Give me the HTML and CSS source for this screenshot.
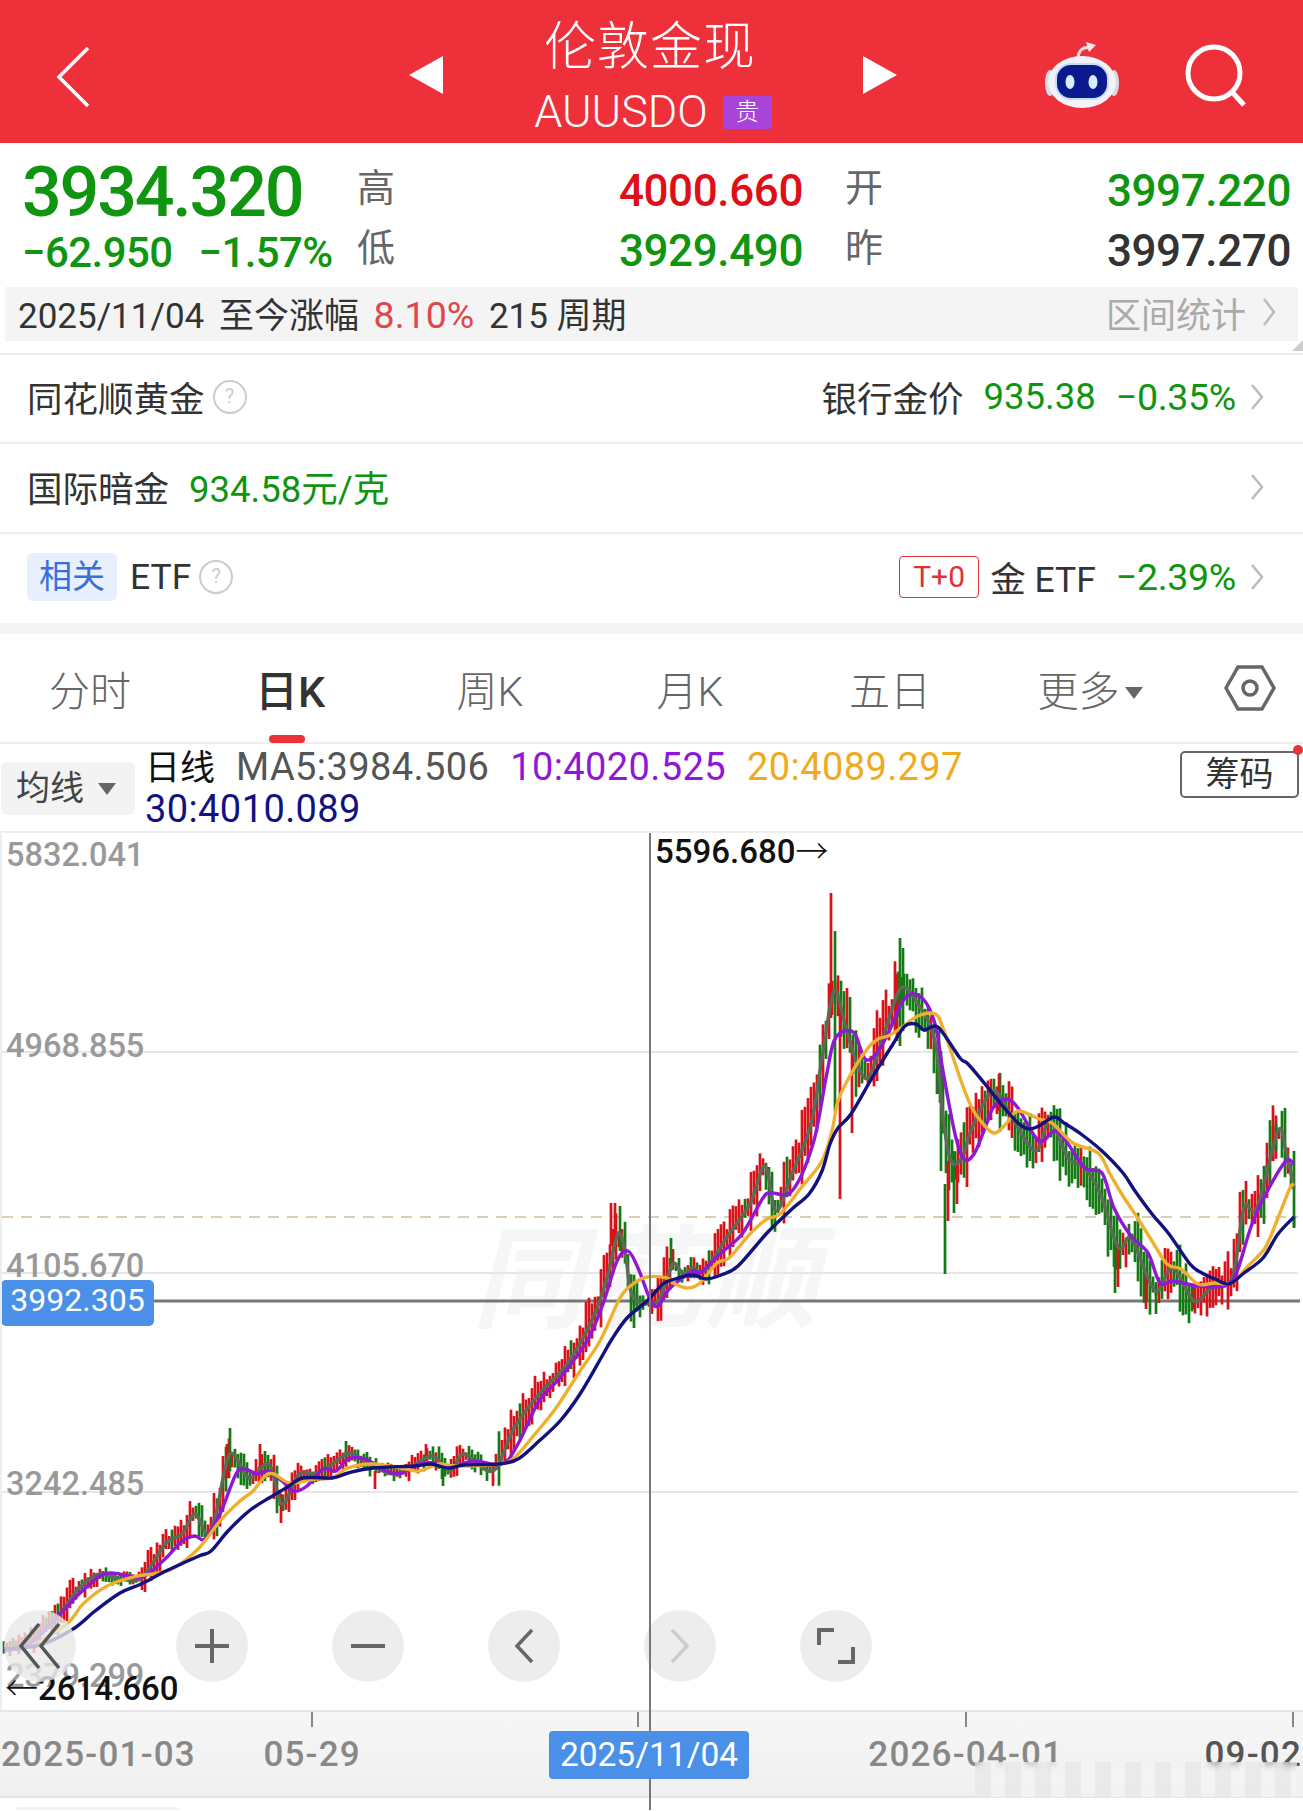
FILE: index.html
```html
<!DOCTYPE html>
<html lang="zh-CN">
<head>
  <meta charset="UTF-8">
  <title>伦敦金现 AUUSDO</title>
  <link rel="stylesheet" href="styles.css">
</head>
<body>
  <header class="topbar">
    <svg class="back" width="36" height="62" viewBox="0 0 36 62"><path d="M33 2 L4 31 L33 60" fill="none" stroke="#fff" stroke-width="3.5"/></svg>
    <svg class="tri" width="34" height="38" viewBox="0 0 34 38"><path d="M34 0V38L0 19Z" fill="#fff"/></svg>
    <div class="title">
      <div class="title-name">伦敦金现</div>
      <div class="title-code">AUUSDO <span class="tag-gold">贵</span></div>
    </div>
    <svg class="tri" width="34" height="38" viewBox="0 0 34 38"><path d="M0 0V38L34 19Z" fill="#fff"/></svg>
    <svg class="robot" width="76" height="68" viewBox="0 0 76 68">
      <path d="M34 19 C34 10 40 6 46 8" fill="none" stroke="#f4dfe0" stroke-width="3"/>
      <path d="M42 2 L52 5 L45 12Z" fill="#f7e6e6"/>
      <ellipse cx="6" cy="43" rx="5" ry="13" fill="#d5dbe6"/>
      <ellipse cx="70" cy="43" rx="5" ry="13" fill="#d5dbe6"/>
      <ellipse cx="38" cy="42" rx="34" ry="26" fill="#f1f3f8"/>
      <rect x="12" y="24" width="52" height="35" rx="15" fill="#0a1a8e" stroke="#c5dcfa" stroke-width="2"/>
      <ellipse cx="26" cy="42" rx="4.5" ry="7" fill="#d6eeff"/>
      <ellipse cx="49" cy="42" rx="4.5" ry="7" fill="#d6eeff"/>
    </svg>
    <svg class="search" width="62" height="66" viewBox="0 0 62 66"><circle cx="29" cy="30" r="26" fill="none" stroke="#fff" stroke-width="5"/><path d="M48 50 L59 62" stroke="#fff" stroke-width="5"/></svg>
  </header>

  <section class="quote">
    <div class="quote-main">
      <div class="price">3934.320</div>
      <div class="change"><span>−62.950</span><span>−1.57%</span></div>
    </div>
    <div class="quote-grid">
      <span class="q-label">高</span><span class="q-val up">4000.660</span>
      <span class="q-label q-label-r">开</span><span class="q-val down">3997.220</span>
      <span class="q-label">低</span><span class="q-val down">3929.490</span>
      <span class="q-label q-label-r">昨</span><span class="q-val flat">3997.270</span>
    </div>
  </section>

  <div class="range">
    <div>2025/11/04 至今涨幅 <span class="range-pct">8.10%</span> <span class="range-count">215 周期</span></div>
    <div class="range-link">区间统计<svg width="14" height="30" viewBox="0 0 14 30"><path d="M2 2 L12 15 L2 28" fill="none" stroke="#bbb" stroke-width="2.5"/></svg></div>
    <i class="range-corner"></i>
  </div>

  <div class="row row-first">
    <div class="row-left">同花顺黄金<span class="help">?</span></div>
    <div class="row-right">银行金价<b class="green gap">935.38</b><b class="green gap pct">−0.35%</b><svg class="more" width="14" height="28" viewBox="0 0 14 28"><path d="M2 2 L12 14 L2 26" fill="none" stroke="#bbb" stroke-width="2.5"/></svg></div>
  </div>
  <div class="row">
    <div class="row-left">国际暗金<b class="green gap">934.58元/克</b></div>
    <div class="row-right"><svg class="more" width="14" height="28" viewBox="0 0 14 28"><path d="M2 2 L12 14 L2 26" fill="none" stroke="#bbb" stroke-width="2.5"/></svg></div>
  </div>
  <div class="row row-last">
    <div class="row-left"><span class="tag-rel">相关</span>ETF<span class="help">?</span></div>
    <div class="row-right"><span class="tag-t0">T+0</span><span class="gold-etf">金 ETF</span><b class="green gap pct">−2.39%</b><svg class="more" width="14" height="28" viewBox="0 0 14 28"><path d="M2 2 L12 14 L2 26" fill="none" stroke="#bbb" stroke-width="2.5"/></svg></div>
  </div>

  <nav class="tabs">
    <span>分时</span>
    <span class="tab-on">日K</span>
    <span>周K</span>
    <span>月K</span>
    <span>五日</span>
    <span>更多<i class="caret"></i></span>
    <svg class="hex" width="52" height="48" viewBox="0 0 52 48"><path d="M14 3H38L50 24L38 45H14L2 24Z" fill="none" stroke="#666" stroke-width="3.5"/><circle cx="26" cy="24" r="7" fill="none" stroke="#666" stroke-width="3.5"/></svg>
  </nav>

  <div class="ma-bar">
    <div class="ma-select">均线<i class="caret caret-sm"></i></div>
    <div class="ma-text">
      <span class="ma-day">日线</span><span class="ma5">MA5:3984.506</span><span class="ma10">10:4020.525</span><span class="ma20">20:4089.297</span><br>
      <span class="ma30">30:4010.089</span>
    </div>
    <div class="chip-btn">筹码<i class="chip-dot"></i></div>
  </div>

  <div class="chart-wrap">
    <div class="chart">
      <svg id="kline" width="1303" height="879" viewBox="0 832 1303 879">
        <text class="watermark" x="472" y="1318">同花顺</text>
        <g class="grid">
          <path d="M2 1051H1298M2 1272H1298M2 1491H1298"/>
        </g>
        <path class="dash" d="M2 1216H1298"/>
        <path class="now-line" d="M2 1300H1300"/>
        <g id="candles"></g>
        <g id="lines"></g>
      </svg>
      <span class="y-label y1">5832.041</span>
      <span class="y-label y2">4968.855</span>
      <span class="y-label y3">4105.670</span>
      <span class="y-label y4">3242.485</span>
      <span class="y-label y5">2379.299</span>
      <span class="now-badge">3992.305</span>
      <span class="peak peak-high">5596.680<span class="thin-arrow">→</span></span>
      <span class="peak peak-low"><span class="thin-arrow">←</span>2614.660</span>
      <div class="controls">
        <span class="ctl ctl-first"><svg width="46" height="48" viewBox="0 0 46 48"><path d="M22 2 L4 24 L22 46M42 2 L24 24 L42 46" fill="none" stroke="#555" stroke-width="3.5"/></svg></span>
        <span class="ctl"><svg width="34" height="34" viewBox="0 0 34 34"><path d="M0 17H34M17 0V34" stroke="#666" stroke-width="4"/></svg></span>
        <span class="ctl"><svg width="34" height="34" viewBox="0 0 34 34"><path d="M0 17H34" stroke="#666" stroke-width="4"/></svg></span>
        <span class="ctl"><svg width="20" height="36" viewBox="0 0 20 36"><path d="M18 2 L3 18 L18 34" fill="none" stroke="#666" stroke-width="3.5"/></svg></span>
        <span class="ctl"><svg width="20" height="36" viewBox="0 0 20 36"><path d="M2 2 L17 18 L2 34" fill="none" stroke="#ccc" stroke-width="3.5"/></svg></span>
        <span class="ctl"><svg width="38" height="38" viewBox="0 0 38 38"><path d="M2 18V3H17M36 20V35H21" fill="none" stroke="#666" stroke-width="4"/></svg></span>
      </div>
    </div>
    <div class="axis">
      <i class="tick t1"></i><i class="tick t2"></i><i class="tick t3"></i><i class="tick t4"></i>
      <span class="x-label">2025-01-03</span>
      <span class="x-label">05-29</span>
      <span class="x-badge">2025/11/04</span>
      <span class="x-label">2026-04-01</span>
      <span class="x-label x-last">09-02</span>
      <div class="smudge"></div>
    </div>
    <div class="tail"><i class="tail-tab"></i></div>
    <i class="crosshair"></i>
  </div>

  <script src="chart.js"></script>
</body>
</html>
```
FILE: styles.css
```css
* {
  box-sizing: border-box;
}
html, body {
  margin: 0;
  height: 1811px;
  overflow: hidden;
  background: #fff;
}
body {
  font-family: Roboto, "Noto Sans CJK SC", sans-serif;
  color: #333;
  width: 1303px;
}
i {
  font-style: normal;
}
b {
  font-weight: 400;
}

/* top bar */
.topbar {
  height: 143px;
  background: #ee303a;
  color: #fff;
  display: flex;
  align-items: center;
}
.back {
  margin-left: 55px;
  margin-top: 10px;
}
.tri {
  margin-top: 6px;
}
.topbar .tri:nth-of-type(2) {
  margin-left: 318px;
}
.title {
  width: 420px;
  text-align: center;
  margin-top: 10px;
}
.title-name {
  font-size: 52px;
  line-height: 62px;
  letter-spacing: 1px;
  font-weight: 300;
  padding-right: 6px;
}
.title-code {
  font-size: 45px;
  line-height: 48px;
  font-weight: 300;
  margin-top: 9px;
  display: flex;
  justify-content: center;
  align-items: center;
  gap: 15px;
}
.tag-gold {
  width: 49px;
  height: 33px;
  background: #a844d8;
  border-radius: 2px;
  font-size: 24px;
  line-height: 33px;
  text-align: center;
}
.robot {
  margin-left: 147px;
  margin-top: 4px;
}
.search {
  margin-left: 65px;
  margin-top: 8px;
}

/* quote */
.quote {
  height: 144px;
  display: flex;
  padding: 0 12px 0 22px;
}
.quote-main {
  width: 335px;
}
.price {
  font-size: 70px;
  font-weight: 500;
  line-height: 70px;
  letter-spacing: -2.2px;
  color: #0f9510;
  margin-top: 14px;
}
.change {
  display: flex;
  gap: 26px;
  font-size: 42px;
  font-weight: 500;
  line-height: 48px;
  letter-spacing: -0.6px;
  color: #0f9510;
  margin-top: 2px;
}
.quote-grid {
  flex: 1;
  display: grid;
  grid-template-columns: 40px 406px 80px 1fr;
  grid-template-rows: 60px 60px;
  padding-top: 18px;
  align-items: center;
}
.q-label {
  font-size: 38px;
  line-height: 50px;
  color: #666;
  margin-top: -6px;
}
.q-label-r {
  justify-self: end;
}
.q-val {
  font-size: 44px;
  font-weight: 500;
  text-align: right;
  letter-spacing: -0.4px;
}
.up {
  color: #df0f17;
}
.down {
  color: #0f9510;
}
.flat {
  color: #333;
}

/* range band */
.range {
  height: 54px;
  margin: 0 5px;
  background: #f4f4f4;
  padding: 0 22px 4px 13px;
  display: flex;
  justify-content: space-between;
  align-items: center;
  font-size: 35px;
  word-spacing: 6px;
  color: #333;
  position: relative;
}
.range-pct {
  color: #e0474d;
  font-size: 37.5px;
}
.range-count {
  word-spacing: 0;
}
.range-link {
  color: #aaa;
  display: flex;
  align-items: center;
  gap: 16px;
}
.range-corner {
  position: absolute;
  right: -5px;
  bottom: -10px;
  width: 0;
  height: 0;
  border-left: 11px solid transparent;
  border-bottom: 11px solid #ccc;
}

/* info rows */
.row {
  height: 90px;
  border-bottom: 2px solid #eee;
  padding: 0 39px 3px 27px;
  display: flex;
  justify-content: space-between;
  align-items: center;
  font-size: 35.5px;
}
.row-first {
  height: 103px;
  padding-top: 13px;
  border-bottom-width: 2px;
  position: relative;
}
.row-first::before {
  content: "";
  position: absolute;
  left: 0;
  right: 0;
  top: 12px;
  border-top: 2px solid #eee;
}
.row-last {
  height: 100px;
  padding-bottom: 4px;
  border-bottom: 11px solid #f4f4f4;
}
.row-left, .row-right {
  display: flex;
  align-items: center;
}
.green {
  color: #0f9510;
  font-size: 36.5px;
}
.pct {
  font-size: 37.5px;
  letter-spacing: -0.3px;
}
.gap {
  margin-left: 20px;
}
.help {
  width: 34px;
  height: 34px;
  margin-left: 8px;
  border: 2.5px solid #ccc;
  border-radius: 50%;
  color: #ccc;
  font-size: 20px;
  line-height: 29px;
  text-align: center;
}
.more {
  margin-left: 14px;
}
.tag-rel {
  background: #e8f0fd;
  color: #3a6fd8;
  border-radius: 5px;
  width: 90px;
  height: 48px;
  font-size: 33px;
  line-height: 47px;
  text-align: center;
  margin-right: 13px;
}
.tag-t0 {
  border: 1px solid #e0303a;
  color: #e0303a;
  border-radius: 4px;
  width: 80px;
  height: 42px;
  font-size: 30px;
  line-height: 40px;
  text-align: center;
}
.gold-etf {
  margin-left: 11px;
}

/* period tabs */
.tabs {
  height: 110px;
  border-bottom: 2px solid #eee;
  margin-left: -10px;
  display: grid;
  grid-template-columns: repeat(6, 200px) 113px;
  align-items: center;
  justify-items: center;
  font-size: 41px;
  font-weight: 300;
  color: #666;
}
.tab-on {
  color: #333;
  font-weight: 500;
  font-size: 43px;
  position: relative;
}
.tab-on::after {
  content: "";
  position: absolute;
  left: 14px;
  width: 36px;
  height: 8px;
  bottom: -24px;
  border-radius: 4px;
  background: #ee303a;
}
.caret {
  display: inline-block;
  width: 0;
  height: 0;
  border: 9px solid transparent;
  border-top: 12px solid #666;
  border-bottom: 0;
  margin-left: 5px;
  vertical-align: 7px;
}
.hex {
  margin-left: 6px;
}

/* moving average bar */
.ma-bar {
  height: 89px;
  border-bottom: 2px solid #eee;
  display: flex;
  position: relative;
}
.ma-select {
  width: 134px;
  height: 53px;
  margin: 18px 0 0 1px;
  background: #f3f3f3;
  border-radius: 6px;
  font-size: 34px;
  color: #444;
  padding-left: 15px;
  line-height: 52px;
}
.caret-sm {
  margin-left: 14px;
  vertical-align: 5px;
}
.ma-text {
  margin-left: 10px;
  padding-top: 3px;
  font-size: 38px;
  line-height: 41px;
  letter-spacing: 0.4px;
  color: #555;
  white-space: nowrap;
}
.ma-text span {
  margin-right: 21px;
}
.ma-day {
  color: #111;
  font-size: 35px;
  letter-spacing: 0;
}
.ma10 {
  color: #8f18d6;
}
.ma20 {
  color: #efaa1e;
}
.ma30 {
  color: #12127f;
}
.chip-btn {
  position: absolute;
  right: 4px;
  top: 7px;
  width: 119px;
  height: 47px;
  border: 2px solid #666;
  border-radius: 5px;
  text-align: center;
  font-size: 34px;
  line-height: 43px;
}
.chip-dot {
  position: absolute;
  right: -6px;
  top: -8px;
  width: 10px;
  height: 10px;
  border-radius: 50%;
  background: #ee303a;
}

/* chart */
.chart-wrap {
  position: relative;
}
.chart {
  position: relative;
  height: 877px;
  border-left: 2px solid #eee;
  overflow: hidden;
}
#kline {
  display: block;
  margin-left: -2px;
}
.watermark {
  font-size: 112px;
  font-weight: 700;
  font-style: italic;
  fill: #f6f6f6;
  letter-spacing: 5px;
}
.grid path {
  stroke: #e6e6e6;
  stroke-width: 2;
}
.dash {
  stroke: #d4bd9d;
  stroke-width: 1.5;
  stroke-dasharray: 11 8;
}
.now-line {
  stroke: #777;
  stroke-width: 3;
}
.y-label {
  position: absolute;
  left: 4px;
  font-size: 32.5px;
  line-height: 38px;
  color: #999;
  font-weight: 500;
}
.y1 { top: 3px; }
.y2 { top: 194px; }
.y3 { top: 414px; }
.y4 { top: 632px; }
.y5 { top: 824px; }
.now-badge {
  position: absolute;
  left: -1px;
  top: 447px;
  width: 153px;
  height: 46px;
  background: #4a90e8;
  border-radius: 5px;
  color: #fff;
  font-size: 32px;
  line-height: 40px;
  text-align: center;
}
.peak {
  position: absolute;
  font-size: 33px;
  font-weight: 500;
  color: #111;
  line-height: 38px;
}
.thin-arrow {
  font-weight: 300;
}
.peak-high {
  left: 653px;
  top: 0;
}
.peak-low {
  left: 3px;
  top: 837px;
}
.controls {
  position: absolute;
  left: 2px;
  top: 777px;
  display: flex;
  gap: 84px;
}
.ctl {
  width: 72px;
  height: 72px;
  border-radius: 50%;
  background: rgba(232, 232, 232, 0.8);
  display: flex;
  align-items: center;
  justify-content: center;
}
.ctl-first {
  margin-right: 16px;
}
.axis {
  position: relative;
  height: 86px;
  border-top: 2px solid #e6e6e6;
  background: linear-gradient(180deg, #f6f6f6 0%, #f0f0f0 100%);
  padding: 0 1px;
  display: flex;
  align-items: center;
  font-size: 35px;
  letter-spacing: 1.2px;
  font-weight: 500;
  color: #888;
}
.x-label {
  white-space: nowrap;
}
.x-label:nth-of-type(1) { width: 263px; }
.x-label:nth-of-type(2) { width: 286px; }
.x-badge {
  position: relative;
  z-index: 1;
  width: 201px;
  height: 48px;
  margin-top: 2px;
  background: #4a90e8;
  border-radius: 4px;
  color: #fff;
  font-size: 33.5px;
  line-height: 47px;
  letter-spacing: 0;
  text-align: center;
  font-weight: 400;
  margin-right: 119px;
}
.x-label:nth-of-type(4) { width: 337px; }
.x-last {
  color: #555;
}
.tick {
  position: absolute;
  top: 0;
  width: 2px;
  height: 15px;
  background: #888;
}
.t1 { left: 311px; }
.t2 { left: 637px; }
.t3 { left: 965px; }
.t4 { left: 1292px; }
.smudge {
  position: absolute;
  left: 975px;
  right: 6px;
  top: 50px;
  height: 35px;
  background: repeating-linear-gradient(90deg, rgba(228, 228, 228, 0.55) 0 16px, rgba(245, 245, 245, 0.55) 16px 30px);
  backdrop-filter: blur(3px);
}
.tail {
  height: 14px;
  border-top: 2px solid #e6e6e6;
  overflow: hidden;
}
.tail-tab {
  display: block;
  width: 165px;
  height: 20px;
  margin: 9px 0 0 15px;
  background: #f2f2f2;
  border-radius: 4px 4px 0 0;
}
.crosshair {
  position: absolute;
  left: 649px;
  top: 0;
  bottom: 0;
  width: 2px;
  background: #777;
}
```
FILE: chart.js
```js
// price lines traced by hand, in page coordinates (the svg viewBox uses the same ones)
const ma5 = [[4,1648],[30,1640],[58,1615],[79,1587],[100,1573],[116,1577],[141,1577],[166,1542],[182,1533],[195,1513],[207,1533],[216,1513],[230,1453],[249,1477],[269,1463],[282,1503],[299,1473],[315,1473],[332,1463],[350,1452],[369,1463],[398,1473],[431,1455],[450,1470],[464,1453],[493,1470],[514,1427],[539,1393],[564,1367],[583,1337],[597,1307],[607,1277],[618,1233],[625,1250],[630,1287],[637,1300],[650,1302],[660,1297],[673,1263],[683,1273],[693,1267],[704,1270],[729,1233],[750,1203],[765,1165],[776,1210],[792,1173],[811,1123],[822,1057],[834,990],[845,1023],[855,1057],[868,1077],[884,1033],[901,987],[918,1003],[935,1040],[943,1117],[951,1160],[962,1157],[972,1127],[993,1090],[1010,1113],[1035,1150],[1050,1120],[1068,1157],[1085,1167],[1102,1197],[1114,1237],[1121,1248],[1131,1237],[1148,1277],[1158,1290],[1173,1267],[1194,1300],[1211,1287],[1232,1277],[1244,1207],[1257,1207],[1278,1130],[1286,1150],[1294,1187]];
const ma10 = [[4,1650],[30,1643],[58,1615],[79,1593],[100,1575],[112,1572],[129,1575],[145,1575],[166,1557],[182,1540],[195,1535],[205,1538],[220,1513],[236,1473],[245,1468],[257,1473],[269,1470],[282,1480],[294,1490],[307,1485],[323,1468],[336,1470],[348,1458],[365,1458],[386,1470],[402,1472],[419,1463],[435,1462],[450,1467],[473,1460],[502,1463],[518,1443],[539,1400],[560,1377],[587,1340],[603,1303],[617,1260],[628,1250],[638,1267],[650,1298],[658,1305],[670,1287],[693,1270],[700,1272],[721,1252],[742,1233],[763,1197],[771,1192],[792,1190],[813,1143],[826,1077],[834,1040],[845,1030],[855,1033],[865,1058],[876,1053],[888,1033],[905,997],[922,997],[935,1023],[943,1070],[955,1133],[964,1158],[974,1153],[985,1127],[993,1107],[1006,1098],[1018,1107],[1039,1140],[1054,1130],[1064,1137],[1085,1167],[1102,1172],[1114,1207],[1131,1235],[1148,1252],[1160,1282],[1173,1280],[1198,1285],[1223,1285],[1236,1273],[1252,1223],[1269,1187],[1286,1160],[1294,1163]];
const ma20 = [[30,1646],[67,1623],[83,1603],[107,1585],[137,1575],[153,1573],[174,1567],[199,1547],[220,1520],[240,1500],[253,1490],[265,1475],[274,1473],[290,1482],[315,1478],[332,1477],[348,1467],[373,1463],[406,1468],[419,1470],[439,1463],[456,1465],[498,1463],[514,1457],[535,1433],[556,1407],[580,1370],[600,1340],[620,1297],[633,1283],[647,1276],[667,1277],[675,1283],[688,1287],[700,1282],[717,1262],[729,1257],[750,1233],[767,1218],[780,1213],[801,1187],[822,1160],[832,1130],[838,1100],[851,1073],[868,1047],[878,1038],[888,1035],[901,1027],[918,1015],[935,1013],[943,1027],[960,1077],[972,1107],[985,1125],[995,1132],[1006,1123],[1018,1110],[1039,1118],[1052,1122],[1073,1142],[1098,1152],[1110,1173],[1123,1195],[1135,1213],[1152,1240],[1167,1263],[1181,1268],[1198,1283],[1215,1282],[1232,1282],[1248,1265],[1265,1247],[1278,1217],[1290,1187],[1294,1183]];
const ma30 = [[4,1648],[40,1644],[73,1628],[95,1610],[120,1592],[141,1583],[166,1570],[199,1555],[211,1550],[228,1530],[249,1510],[269,1497],[286,1487],[303,1477],[332,1477],[348,1472],[373,1467],[415,1465],[431,1463],[448,1467],[464,1464],[498,1463],[518,1458],[539,1440],[560,1420],[580,1393],[601,1357],[612,1338],[627,1317],[647,1300],[663,1283],[675,1278],[692,1274],[706,1278],[721,1274],[738,1265],[767,1232],[792,1208],[809,1193],[822,1170],[830,1143],[838,1127],[851,1113],[872,1077],[893,1043],[905,1025],[916,1023],[924,1029],[935,1025],[943,1032],[960,1057],[968,1063],[985,1083],[1001,1103],[1018,1122],[1029,1128],[1039,1125],[1054,1116],[1064,1122],[1081,1133],[1102,1150],[1123,1172],[1135,1190],[1152,1213],[1169,1233],[1190,1263],[1202,1272],[1215,1278],[1229,1283],[1244,1272],[1263,1257],[1278,1233],[1294,1216]];

// candles that stick out of the band: x, top, bottom, up?
const spikes = [
  [831,892,1017,1],[835,930,1110,0],[840,1007,1198,1],[852,1040,1132,1],
  [897,973,1040,1],[900,937,1045,0],[903,947,1030,0],[939,1030,1093,0],
  [941,1050,1170,0],[945,1183,1273,0],[948,1160,1220,1],[954,1150,1212,0],
  [957,1160,1203,1],[999,1073,1110,1],[1115,1243,1292,0],[1118,1243,1286,1],
  [1146,1273,1308,1],[1156,1283,1313,0],[1194,1283,1308,1],[1294,1215,1227,0],
  [1276,1122,1150,0],[1273,1125,1160,1],[1267,1163,1197,1],
  [227,1443,1477,1],[230,1427,1470,0],[260,1443,1473,1],[265,1450,1480,0],
  [281,1493,1522,1],[375,1470,1488,1],[443,1465,1485,0],[346,1440,1460,0],
  [426,1443,1460,1],[611,1202,1245,1],[615,1202,1245,1],[620,1205,1250,0],
  [634,1290,1327,0],[671,1237,1270,0]
];

const NS = 'http://www.w3.org/2000/svg';
const RED = '#d81218';
const GREEN = '#147a14';

let seed = 20251104;
function rnd() {
  seed = (seed * 1103515245 + 12345) % 2147483648;
  return seed / 2147483648;
}

function at(points, x) {
  for (let i = 1; i < points.length; i++) {
    if (x <= points[i][0]) {
      const [x0, y0] = points[i - 1];
      const [x1, y1] = points[i];
      return y0 + (y1 - y0) * Math.max(0, x - x0) / (x1 - x0);
    }
  }
  return points[points.length - 1][1];
}

function addBar(parent, x, top, bottom, color, w) {
  const r = document.createElementNS(NS, 'rect');
  r.setAttribute('x', x - w / 2);
  r.setAttribute('y', top);
  r.setAttribute('width', w);
  r.setAttribute('height', Math.max(bottom - top, 1));
  r.setAttribute('fill', color);
  parent.appendChild(r);
}

function smoothPath(points) {
  let d = `M${points[0][0]} ${points[0][1]}`;
  for (let i = 0; i < points.length - 1; i++) {
    const p0 = points[i - 1] || points[i];
    const p1 = points[i];
    const p2 = points[i + 1];
    const p3 = points[i + 2] || p2;
    const c1x = p1[0] + (p2[0] - p0[0]) / 6;
    const c1y = p1[1] + (p2[1] - p0[1]) / 6;
    const c2x = p2[0] - (p3[0] - p1[0]) / 6;
    const c2y = p2[1] - (p3[1] - p1[1]) / 6;
    d += `C${c1x.toFixed(1)} ${c1y.toFixed(1)} ${c2x.toFixed(1)} ${c2y.toFixed(1)} ${p2[0]} ${p2[1]}`;
  }
  return d;
}

const candles = document.getElementById('candles');
for (let x = 4; x < 1296; x += 3) {
  const c = at(ma5, x);
  const slope = (at(ma5, x - 6) - at(ma5, x + 6)) / 12;
  const isUp = rnd() < Math.min(0.9, Math.max(0.12, 0.5 + slope * 1.5));
  const base = x < 500 ? 6 : x < 800 ? 8 : 14;
  const spread = base + Math.min(Math.abs(slope) * 8, 20);
  const top = c - spread * (0.3 + rnd());
  const bottom = c + spread * (0.3 + rnd());
  addBar(candles, x, top, bottom, isUp ? RED : GREEN, 2.7);
}
spikes.forEach(([x, top, bottom, up]) => addBar(candles, x, top, bottom, up ? RED : GREEN, 2.7));

const lines = document.getElementById('lines');
[[ma5, '#5c6a56'], [ma10, '#8f18d6'], [ma20, '#efb030'], [ma30, '#12127f']].forEach(([pts, color]) => {
  const p = document.createElementNS(NS, 'path');
  p.setAttribute('d', smoothPath(pts));
  p.setAttribute('fill', 'none');
  p.setAttribute('stroke', color);
  p.setAttribute('stroke-width', 3.4);
  p.setAttribute('stroke-linejoin', 'round');
  lines.appendChild(p);
});
```
